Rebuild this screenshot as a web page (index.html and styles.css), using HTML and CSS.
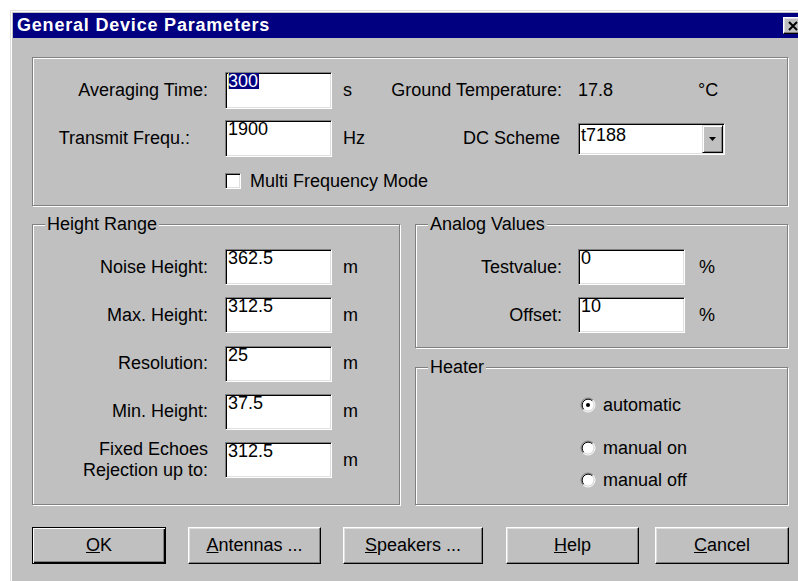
FILE: index.html
```html
<!DOCTYPE html>
<html lang="en">
<head>
<meta charset="utf-8">
<title>General Device Parameters</title>
<link rel="stylesheet" href="styles.css">
</head>
<body>
<div class="window">
  <div class="titlebar">
    <span class="title">General Device Parameters</span>
    <button class="close" type="button" aria-label="Close">
      <svg width="14" height="12" viewBox="0 0 14 12"><path d="M3 2 L11 10 M11 2 L3 10" stroke="#000" stroke-width="2" fill="none"/></svg>
    </button>
  </div>

  <div class="body">
    <div class="group group-main">
      <div class="row field-row">
        <span class="lbl">Averaging Time:</span>
        <div class="edit"><span class="sel">300</span></div>
        <span class="unit">s</span>
        <span class="lbl2">Ground Temperature:</span>
        <span class="value">17.8</span>
        <span class="deg">°C</span>
      </div>
      <div class="row field-row row-gap">
        <span class="lbl lbl-short">Transmit Frequ.:</span>
        <div class="edit">1900</div>
        <span class="unit">Hz</span>
        <span class="lbl2 lbl2-dc">DC Scheme</span>
        <div class="combo">
          <span class="combo-text">t7188</span>
          <span class="combo-btn">
            <svg width="8" height="4" viewBox="0 0 8 4"><path d="M0 0 H7 L3.5 4 Z" fill="#000"/></svg>
          </span>
        </div>
      </div>
      <div class="row check-row">
        <span class="checkbox"></span>
        <span class="check-label">Multi Frequency Mode</span>
      </div>
    </div>

    <div class="columns">
      <div class="group group-height">
        <span class="legend">Height Range</span>
        <div class="stack">
          <div class="row hrow">
            <span class="lbl">Noise Height:</span>
            <div class="edit">362.5</div>
            <span class="unit">m</span>
          </div>
          <div class="row hrow">
            <span class="lbl">Max. Height:</span>
            <div class="edit">312.5</div>
            <span class="unit">m</span>
          </div>
          <div class="row hrow">
            <span class="lbl">Resolution:</span>
            <div class="edit">25</div>
            <span class="unit">m</span>
          </div>
          <div class="row hrow">
            <span class="lbl">Min. Height:</span>
            <div class="edit">37.5</div>
            <span class="unit">m</span>
          </div>
          <div class="row hrow">
            <span class="lbl lbl-two">Fixed Echoes<br>Rejection up to:</span>
            <div class="edit">312.5</div>
            <span class="unit">m</span>
          </div>
        </div>
      </div>

      <div class="side">
        <div class="group group-analog">
          <span class="legend">Analog Values</span>
          <div class="stack">
            <div class="row arow">
              <span class="lbl-a">Testvalue:</span>
              <div class="edit">0</div>
              <span class="unit-a">%</span>
            </div>
            <div class="row arow">
              <span class="lbl-a">Offset:</span>
              <div class="edit">10</div>
              <span class="unit-a">%</span>
            </div>
          </div>
        </div>

        <div class="group group-heater">
          <span class="legend">Heater</span>
          <div class="radios">
            <div class="radio-row r-auto">
              <svg class="radio" width="16" height="16" viewBox="0 0 16 16">
                <circle cx="8" cy="8" r="6" fill="#fff"/>
                <path d="M3.05 12.95 A7 7 0 0 1 12.95 3.05" stroke="#808080" fill="none"/>
                <path d="M12.95 3.05 A7 7 0 0 1 3.05 12.95" stroke="#fff" fill="none"/>
                <path d="M3.76 12.24 A6 6 0 0 1 12.24 3.76" stroke="#000" fill="none"/>
                <path d="M12.24 3.76 A6 6 0 0 1 3.76 12.24" stroke="#dfdfdf" fill="none"/>
                <circle cx="8" cy="8" r="2" fill="#000"/>
              </svg>
              <span>automatic</span>
            </div>
            <div class="radio-row r-on">
              <svg class="radio" width="16" height="16" viewBox="0 0 16 16">
                <circle cx="8" cy="8" r="6" fill="#fff"/>
                <path d="M3.05 12.95 A7 7 0 0 1 12.95 3.05" stroke="#808080" fill="none"/>
                <path d="M12.95 3.05 A7 7 0 0 1 3.05 12.95" stroke="#fff" fill="none"/>
                <path d="M3.76 12.24 A6 6 0 0 1 12.24 3.76" stroke="#000" fill="none"/>
                <path d="M12.24 3.76 A6 6 0 0 1 3.76 12.24" stroke="#dfdfdf" fill="none"/>
              </svg>
              <span>manual on</span>
            </div>
            <div class="radio-row r-off">
              <svg class="radio" width="16" height="16" viewBox="0 0 16 16">
                <circle cx="8" cy="8" r="6" fill="#fff"/>
                <path d="M3.05 12.95 A7 7 0 0 1 12.95 3.05" stroke="#808080" fill="none"/>
                <path d="M12.95 3.05 A7 7 0 0 1 3.05 12.95" stroke="#fff" fill="none"/>
                <path d="M3.76 12.24 A6 6 0 0 1 12.24 3.76" stroke="#000" fill="none"/>
                <path d="M12.24 3.76 A6 6 0 0 1 3.76 12.24" stroke="#dfdfdf" fill="none"/>
              </svg>
              <span>manual off</span>
            </div>
          </div>
        </div>
      </div>
    </div>

    <div class="buttons">
      <button class="btn btn-default btn-ok" type="button"><u>O</u>K</button>
      <button class="btn btn-ant" type="button"><u>A</u>ntennas ...</button>
      <button class="btn btn-spk" type="button"><u>S</u>peakers ...</button>
      <button class="btn btn-help" type="button"><u>H</u>elp</button>
      <button class="btn btn-cancel" type="button"><u>C</u>ancel</button>
    </div>
  </div>
</div>
</body>
</html>
```

FILE: styles.css
```css
* {
  box-sizing: border-box;
}

html,
body {
  margin: 0;
  padding: 0;
}

body {
  width: 798px;
  height: 581px;
  overflow: hidden;
  background: #fff;
  font-family: "Liberation Sans", Arial, sans-serif;
  font-size: 18px;
  color: #000;
}

/* Dialog frame */
.window {
  margin: 10px 0 0 10px;
  width: 798px;
  height: 600px;
  padding: 2px;
  background: #c0c0c0;
  border: 1px solid;
  border-color: #dfdfdf #000 #000 #dfdfdf;
  box-shadow: inset 1px 1px #fff, inset -1px -1px #808080;
}

.titlebar {
  height: 25px;
  display: flex;
  align-items: center;
  padding-left: 4px;
  background: #000080;
}

.title {
  flex: 1;
  color: #fff;
  font-weight: bold;
  font-size: 18px;
  letter-spacing: 0.8px;
  line-height: 25px;
  white-space: nowrap;
}

.close {
  width: 20px;
  height: 17px;
  margin: 0 2px 0 0;
  padding: 0;
  display: flex;
  align-items: center;
  justify-content: center;
  background: #c0c0c0;
  border: 1px solid;
  border-color: #fff #000 #000 #fff;
  box-shadow: inset -1px -1px #808080, inset 1px 1px #dfdfdf;
}

.body {
  padding: 19px 0 0 19px;
}

/* Etched group boxes */
.group {
  position: relative;
  border: 1px solid #808080;
  box-shadow: inset 1px 1px #fff, 1px 1px #fff;
}

.legend {
  position: absolute;
  top: -11px;
  left: 12px;
  padding: 0 2px;
  line-height: 20px;
  background: #c0c0c0;
  white-space: nowrap;
}

.row {
  display: flex;
  align-items: center;
}

.lbl {
  flex: none;
  width: 175px;
  margin-right: 17px;
  text-align: right;
  white-space: nowrap;
}

.lbl-short {
  padding-right: 18px;
}

.lbl-two {
  line-height: 21px;
}

.edit {
  flex: none;
  width: 107px;
  height: 37px;
  padding: 0 0 0 2px;
  line-height: 16px;
  background: #fff;
  border: 1px solid;
  border-color: #808080 #fff #fff #808080;
  box-shadow: inset 1px 1px #000, inset -1px -1px #dfdfdf;
  white-space: nowrap;
}

.sel {
  display: inline-block;
  height: 16px;
  line-height: 16px;
  padding-right: 1px;
  background: #000080;
  color: #fff;
  box-shadow: inset 1px 0 #d8d070;
}

.unit {
  flex: none;
  width: 40px;
  margin-left: 11px;
}

/* Top group */
.group-main {
  width: 756px;
  height: 149px;
  padding-top: 14px;
}

.field-row {
  height: 37px;
}

.row-gap {
  margin-top: 11px;
}

.lbl2 {
  flex: none;
  width: 179px;
  margin-right: 16px;
  text-align: right;
  white-space: nowrap;
}

.lbl2-dc {
  padding-right: 2px;
}

.value {
  flex: none;
  width: 120px;
}

.combo {
  flex: none;
  width: 147px;
  height: 32px;
  display: flex;
  background: #fff;
  border: 1px solid;
  border-color: #808080 #fff #fff #808080;
  box-shadow: inset 1px 1px #000, inset -1px -1px #dfdfdf;
  padding: 1px;
}

.combo-text {
  flex: 1;
  padding: 2px 0 0 1px;
  line-height: 16px;
}

.combo-btn {
  flex: none;
  width: 21px;
  height: 28px;
  display: flex;
  align-items: center;
  justify-content: center;
  background: #c0c0c0;
  border: 1px solid;
  border-color: #dfdfdf #000 #000 #dfdfdf;
  box-shadow: inset 1px 1px #fff, inset -1px -1px #808080;
}

.check-row {
  height: 20px;
  margin-top: 14px;
}

.checkbox {
  flex: none;
  width: 16px;
  height: 16px;
  margin-left: 192px;
  background: #fff;
  border: 1px solid;
  border-color: #808080 #fff #fff #808080;
  box-shadow: inset 1px 1px #000, inset -1px -1px #dfdfdf;
}

.check-label {
  margin-left: 9px;
  white-space: nowrap;
}

/* Lower section */
.columns {
  display: flex;
  align-items: flex-start;
  gap: 15px;
  margin-top: 18px;
}

.group-height {
  flex: none;
  width: 368px;
  height: 281px;
  padding-top: 24px;
}

.stack {
  display: flex;
  flex-direction: column;
  gap: 12.25px;
}

.hrow,
.arow {
  height: 36px;
}

.hrow .edit,
.arow .edit {
  height: 36px;
}

.side {
  flex: none;
  width: 373px;
  display: flex;
  flex-direction: column;
  gap: 19px;
}

.group-analog {
  height: 124px;
  padding-top: 24px;
}

.lbl-a {
  flex: none;
  width: 146px;
  margin-right: 16px;
  text-align: right;
}

.unit-a {
  margin-left: 14px;
}

.group-heater {
  height: 138px;
  padding: 27px 0 0 164px;
}

.radio-row {
  display: flex;
  align-items: center;
  height: 20px;
}

.radio {
  flex: none;
  margin-right: 7px;
}

.r-on {
  margin-top: 23px;
}

.r-off {
  margin-top: 12px;
}

/* Push buttons */
.buttons {
  display: flex;
  margin-top: 22px;
}

.btn {
  flex: none;
  width: 133px;
  height: 37px;
  padding: 0;
  font-family: inherit;
  font-size: 18px;
  color: #000;
  background: #c0c0c0;
  border: 1px solid;
  border-color: #fff #000 #000 #fff;
  box-shadow: inset -1px -1px #808080, inset 1px 1px #dfdfdf;
}

.btn-default {
  border-color: #000;
  box-shadow: inset 1px 1px #fff, inset -1px -1px #000, inset -2px -2px #808080;
}

.btn-ok {
  width: 134px;
}

.btn-ant {
  margin-left: 22px;
}

.btn-spk {
  width: 140px;
  margin-left: 22px;
}

.btn-help {
  margin-left: 23px;
}

.btn-cancel {
  width: 134px;
  margin-left: 16px;
}
```
